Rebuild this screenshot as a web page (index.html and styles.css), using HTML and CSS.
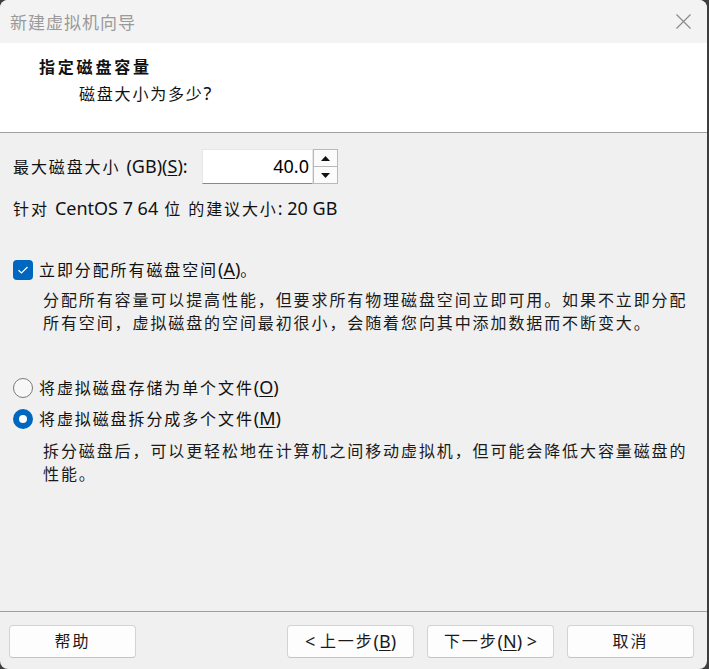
FILE: index.html
```html
<!DOCTYPE html>
<html lang="zh-CN">
<head>
<meta charset="utf-8">
<title>新建虚拟机向导</title>
<link rel="stylesheet" href="styles.css">
</head>
<body>
<div class="window">
  <div class="titlebar">
    <span class="title">新建虚拟机向导</span>
    <svg class="close" width="15" height="15" viewBox="0 0 15 15"><path d="M0.5 0.5 L14.5 14.5 M14.5 0.5 L0.5 14.5" stroke="#8a8a8a" stroke-width="1.2" fill="none"/></svg>
  </div>
  <div class="header">
    <div class="h-title">指定磁盘容量</div>
    <div class="h-sub">磁盘大小为多少<span class="lt">?</span></div>
  </div>
  <div class="content">
    <div class="size-row">
      <label class="song size-label">最大磁盘大小 <span class="lt">(GB)(<u>S</u>):</span></label>
      <div class="spin">
        <div class="spin-input lt">40.0</div>
        <div class="spin-btns">
          <div class="spin-btn"><svg width="9" height="5" viewBox="0 0 9 5"><path d="M0 5 L4.5 0 L9 5 Z" fill="#111"/></svg></div>
          <div class="spin-btn"><svg width="9" height="5" viewBox="0 0 9 5"><path d="M0 0 L4.5 5 L9 0 Z" fill="#111"/></svg></div>
        </div>
      </div>
    </div>
    <div class="song rec">针对 <span class="lt">CentOS 7 64</span> 位 的建议大小<span class="lt">: 20 GB</span></div>

    <div class="check-row">
      <span class="checkbox"><svg width="12" height="10" viewBox="0 0 12 10"><path d="M1.5 5.2 L4.5 8 L10.5 2" stroke="#fff" stroke-width="1.2" fill="none"/></svg></span>
      <span class="song">立即分配所有磁盘空间<span class="lt">(<u>A</u>)</span>。</span>
    </div>
    <p class="song desc desc1">分配所有容量可以提高性能，但要求所有物理磁盘空间立即可用。如果不立即分配所有空间，虚拟磁盘的空间最初很小，会随着您向其中添加数据而不断变大。</p>

    <div class="radio-row r1">
      <span class="radio"></span>
      <span class="song">将虚拟磁盘存储为单个文件<span class="lt">(<u>O</u>)</span></span>
    </div>
    <div class="radio-row r2">
      <span class="radio on"></span>
      <span class="song">将虚拟磁盘拆分成多个文件<span class="lt">(<u>M</u>)</span></span>
    </div>
    <p class="song desc desc2">拆分磁盘后，可以更轻松地在计算机之间移动虚拟机，但可能会降低大容量磁盘的性能。</p>
  </div>
  <div class="footer">
    <button class="btn song">帮助</button>
    <div class="btn-group">
      <button class="btn song"><span class="lt">&lt; </span>上一步<span class="lt">(<u>B</u>)</span></button>
      <button class="btn song">下一步<span class="lt">(<u>N</u>) &gt;</span></button>
      <button class="btn song">取消</button>
    </div>
  </div>
</div>
</body>
</html>
```
FILE: styles.css
```css
* { box-sizing: border-box; }
html, body { margin: 0; padding: 0; }
body {
  background: #3e3e3e;
  width: 709px;
  height: 669px;
  overflow: hidden;
  font-family: "Noto Sans", "Noto Sans CJK SC", sans-serif;
  color: #111;
}
.window {
  width: 707px;
  height: 669px;
  background: #f0f0f0;
  border-radius: 8px;
  overflow: hidden;
  display: flex;
  flex-direction: column;
}
.titlebar {
  height: 43px;
  flex: none;
  background: #f3f3f3;
  display: flex;
  align-items: center;
  justify-content: space-between;
  padding: 0 16px 0 10px;
}
.title {
  font-family: "Noto Sans CJK SC", sans-serif;
  font-size: 17px;
  letter-spacing: 1px;
  color: #9a9a9a;
  line-height: 20px;
}
.close { display: block; margin-top: -1px; }
.header {
  height: 90px;
  flex: none;
  background: #fff;
  border-bottom: 1px solid #a0a0a0;
  padding: 12px 0 0 39px;
}
.h-title {
  font-family: "Noto Sans CJK SC", sans-serif;
  font-weight: 700;
  font-size: 16px;
  letter-spacing: 2.8px;
  line-height: 23px;
}
.h-sub {
  font-family: "Noto Sans CJK SC", sans-serif;
  font-size: 16px;
  letter-spacing: 1.8px;
  line-height: 23px;
  margin: 4px 0 0 40px;
}
.lt {
  font-family: "Noto Sans", sans-serif;
  font-size: 18px;
  letter-spacing: 0;
}
.song {
  font-family: "Noto Sans", "Noto Sans CJK SC", sans-serif;
  font-size: 16px;
  letter-spacing: 1.9px;
  line-height: 23px;
}
u { text-underline-offset: 2px; }
.content {
  flex: 1;
  padding: 0 0 0 13px;
}
.size-row {
  display: flex;
  align-items: center;
  margin-top: 16px;
  height: 35px;
}
.size-label {
  width: 189px;
  flex: none;
  white-space: nowrap;
}
.spin {
  display: flex;
  height: 35px;
}
.spin-input {
  width: 111px;
  height: 35px;
  background: #fff;
  border: 1px solid #e6e6e6;
  border-bottom-color: #8a8a8a;
  text-align: right;
  padding-right: 3px;
  line-height: 32px;
  color: #000;
}
.spin-btns {
  width: 25px;
  display: flex;
  flex-direction: column;
  border: 1px solid #b9b9b9;
  background: #fbfbfb;
}
.spin-btn {
  flex: 1;
  display: flex;
  align-items: center;
  justify-content: center;
}
.spin-btn + .spin-btn { border-top: 1px solid #b9b9b9; }
.spin-btn svg { display: block; }
.rec { margin-top: 13px; }
.check-row {
  display: flex;
  align-items: center;
  gap: 6px;
  margin-top: 37px;
  height: 23px;
}
.checkbox {
  width: 20px;
  height: 20px;
  border-radius: 4px;
  background: #0067c0;
  display: flex;
  align-items: center;
  justify-content: center;
  flex: none;
}
.checkbox svg { display: block; }
.desc {
  margin: 0;
  padding-left: 30px;
  padding-right: 10px;
  color: #1a1a1a;
}
.desc1 { margin-top: 8px; }
.radio-row {
  display: flex;
  align-items: center;
  gap: 6px;
  height: 23px;
}
.r1 { margin-top: 41px; }
.r2 { margin-top: 8px; }
.radio {
  width: 20px;
  height: 20px;
  border-radius: 50%;
  border: 1px solid #7a7a7a;
  background: #f7f7f7;
  flex: none;
}
.radio.on {
  border: 6px solid #0067c0;
  background: #fff;
}
.desc2 { margin-top: 10px; }
.footer {
  flex: none;
  height: 58px;
  border-top: 1px solid #a0a0a0;
  display: flex;
  justify-content: space-between;
  padding: 13px 13px 0 9px;
}
.btn-group {
  display: flex;
  gap: 13px;
}
.btn {
  width: 127px;
  height: 33px;
  background: #fdfdfd;
  border: 1px solid #d3d3d3;
  border-bottom-color: #c4c4c4;
  border-radius: 4px;
  color: #1a1a1a;
  padding: 0;
  display: flex;
  align-items: center;
  justify-content: center;
  white-space: pre;
}
```
